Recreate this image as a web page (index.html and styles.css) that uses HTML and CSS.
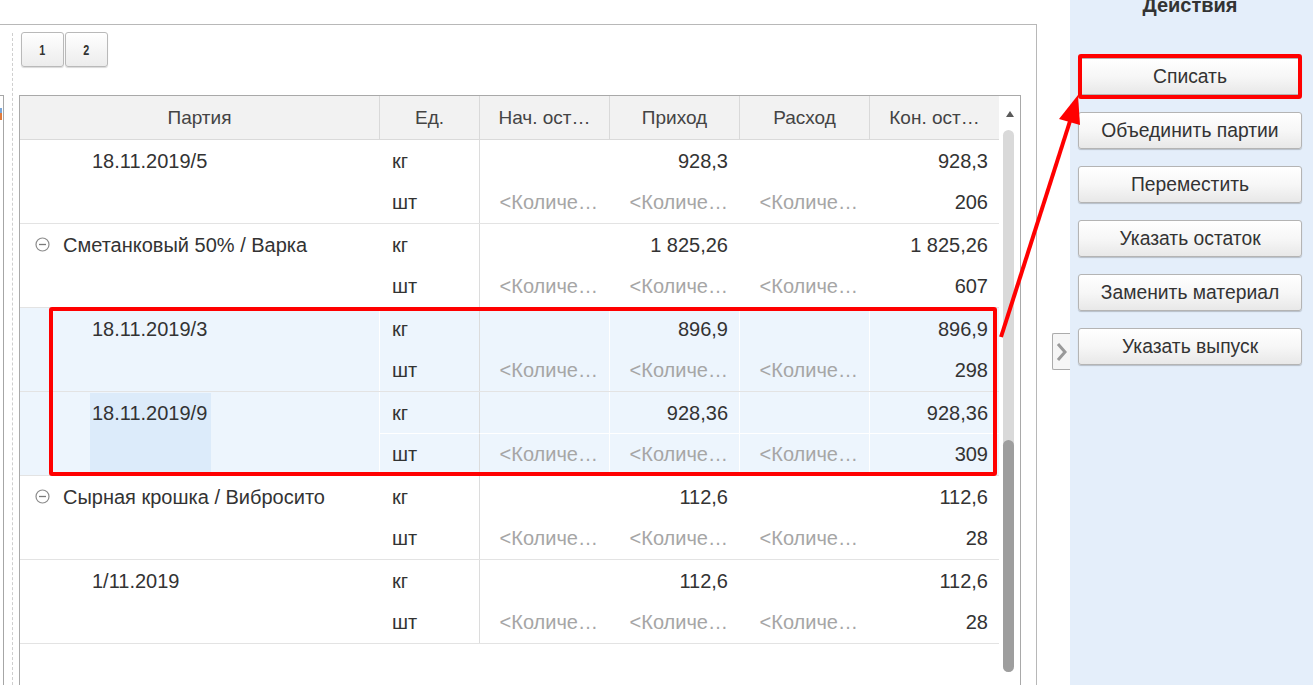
FILE: index.html
```html
<!DOCTYPE html>
<html lang="ru">
<head>
<meta charset="utf-8">
<title>Партии</title>
<link rel="stylesheet" href="styles.css">
</head>
<body>
<div class="app">
  <div class="main">
    <div class="leftfrag"><span class="fragicon"></span></div>
    <div class="dash"></div>
    <div class="content">
      <div class="pages">
        <div class="pbtn"><span>1</span></div>
        <div class="pbtn"><span>2</span></div>
      </div>
      <div class="table">
        <div class="tmain">
          <div class="thead">
            <div class="th w1">Партия</div>
            <div class="th w2">Ед.</div>
            <div class="th w3">Нач. ост…</div>
            <div class="th w3">Приход</div>
            <div class="th w3">Расход</div>
            <div class="th w6 last">Кон. ост…</div>
          </div>
          <div class="rows">
            <div class="group">
              <div class="name sub">18.11.2019/5</div>
              <div class="cell unit">кг</div><div class="cell num"></div><div class="cell num">928,3</div><div class="cell num"></div><div class="cell num last">928,3</div>
              <div class="cell unit">шт</div><div class="cell num ph">&lt;Количе…</div><div class="cell num ph">&lt;Количе…</div><div class="cell num ph">&lt;Количе…</div><div class="cell num last">206</div>
            </div>
            <div class="group">
              <div class="name grp"><svg class="minus" width="15" height="15" viewBox="0 0 15 15"><circle cx="7.5" cy="7.5" r="6.5" fill="none" stroke="#8c8c8c" stroke-width="1.2"/><line x1="4" y1="7.5" x2="11" y2="7.5" stroke="#7a7a7a" stroke-width="1.3"/></svg>Сметанковый 50% / Варка</div>
              <div class="cell unit">кг</div><div class="cell num"></div><div class="cell num">1 825,26</div><div class="cell num"></div><div class="cell num last">1 825,26</div>
              <div class="cell unit">шт</div><div class="cell num ph">&lt;Количе…</div><div class="cell num ph">&lt;Количе…</div><div class="cell num ph">&lt;Количе…</div><div class="cell num last">607</div>
            </div>
            <div class="group sel">
              <div class="name sub">18.11.2019/3</div>
              <div class="cell unit">кг</div><div class="cell num"></div><div class="cell num">896,9</div><div class="cell num"></div><div class="cell num last">896,9</div>
              <div class="cell unit">шт</div><div class="cell num ph">&lt;Количе…</div><div class="cell num ph">&lt;Количе…</div><div class="cell num ph">&lt;Количе…</div><div class="cell num last">298</div>
            </div>
            <div class="group sel cur">
              <div class="name sub"><span class="curtext">18.11.2019/9</span></div>
              <div class="cell unit top">кг</div><div class="cell num top"></div><div class="cell num top">928,36</div><div class="cell num top"></div><div class="cell num last top">928,36</div>
              <div class="cell unit">шт</div><div class="cell num ph">&lt;Количе…</div><div class="cell num ph">&lt;Количе…</div><div class="cell num ph">&lt;Количе…</div><div class="cell num last">309</div>
            </div>
            <div class="group">
              <div class="name grp"><svg class="minus" width="15" height="15" viewBox="0 0 15 15"><circle cx="7.5" cy="7.5" r="6.5" fill="none" stroke="#8c8c8c" stroke-width="1.2"/><line x1="4" y1="7.5" x2="11" y2="7.5" stroke="#7a7a7a" stroke-width="1.3"/></svg>Сырная крошка / Вибросито</div>
              <div class="cell unit">кг</div><div class="cell num"></div><div class="cell num">112,6</div><div class="cell num"></div><div class="cell num last">112,6</div>
              <div class="cell unit">шт</div><div class="cell num ph">&lt;Количе…</div><div class="cell num ph">&lt;Количе…</div><div class="cell num ph">&lt;Количе…</div><div class="cell num last">28</div>
            </div>
            <div class="group">
              <div class="name sub">1/11.2019</div>
              <div class="cell unit">кг</div><div class="cell num"></div><div class="cell num">112,6</div><div class="cell num"></div><div class="cell num last">112,6</div>
              <div class="cell unit">шт</div><div class="cell num ph">&lt;Количе…</div><div class="cell num ph">&lt;Количе…</div><div class="cell num ph">&lt;Количе…</div><div class="cell num last">28</div>
            </div>
          </div>
        </div>
        <div class="vscroll">
          <div class="up"><span class="tri"></span></div>
          <div class="track"><div class="thumb"></div></div>
        </div>
      </div>
    </div>
  </div>
  <div class="gutter">
    <div class="tab"><svg width="14" height="22" viewBox="0 0 14 22"><polyline points="3,3 10,11 3,19" fill="none" stroke="#9a9a9a" stroke-width="3"/></svg></div>
  </div>
  <aside class="panel">
    <div class="ptitle">Действия</div>
    <div class="btns">
      <div class="btn">Списать</div>
      <div class="btn">Объединить партии</div>
      <div class="btn">Переместить</div>
      <div class="btn">Указать остаток</div>
      <div class="btn">Заменить материал</div>
      <div class="btn">Указать выпуск</div>
    </div>
  </aside>
</div>
<div class="mark rows-mark"></div>
<div class="mark btn-mark"></div>
<svg class="arrow" width="1313" height="685" viewBox="0 0 1313 685">
  <line x1="1001" y1="337" x2="1071" y2="118" stroke="#ff0000" stroke-width="4"/>
  <polygon points="1078,95 1059,119 1080,125" fill="#ff0000"/>
</svg>
</body>
</html>
```
FILE: styles.css
```css
* { box-sizing: border-box; }
html, body {
  margin: 0;
  height: 685px;
  overflow: hidden;
  background: #fff;
  font-family: "Liberation Sans", Arial, sans-serif;
  color: #333;
}
.app { display: flex; height: 685px; }

.main {
  width: 1037px;
  flex: none;
  margin-top: 24px;
  border-top: 1px solid #b8b8b8;
  border-right: 1px solid #b8b8b8;
  display: flex;
}
.leftfrag {
  width: 4px;
  flex: none;
  margin-top: 70px;
  border-top: 1px solid #a6a6a6;
  border-right: 1px solid #a6a6a6;
  position: relative;
}
.fragicon {
  position: absolute;
  left: 0;
  top: 12px;
  width: 2px;
  height: 12px;
  background: linear-gradient(#7aa6d8 0 40%, #e07a3a 40% 100%);
}
.dash {
  width: 1px;
  flex: none;
  margin-left: 8px;
  margin-top: 8px;
  border-left: 1px dashed #cfcfcf;
}
.content { padding-top: 7px; }

.pages { display: flex; gap: 1px; margin-left: 8px; }
.pbtn {
  width: 43px;
  height: 35px;
  border: 1px solid #b9b9b9;
  border-radius: 3px;
  background: linear-gradient(#ffffff, #ececec);
  box-shadow: 0 1px 1px rgba(0,0,0,0.15);
  display: flex;
  align-items: center;
  justify-content: center;
  font-weight: bold;
  font-size: 15px;
  color: #333;
}
.pbtn span { display: inline-block; transform: scaleX(0.72); }

.table {
  margin-left: 6px;
  margin-top: 28px;
  width: 1002px;
  height: 600px;
  border: 1px solid #a9a9a9;
  display: flex;
}
.tmain { width: 979px; flex: none; }
.thead { display: flex; height: 44px; border-bottom: 1px solid #dadada; }
.th {
  background: #f2f2f2;
  border-right: 1px solid #d9d9d9;
  display: flex;
  align-items: center;
  justify-content: center;
  font-size: 19px;
  color: #444;
  white-space: nowrap;
}
.th.last { border-right: none; }
.w1 { width: 360px; }
.w2 { width: 100px; }
.w3 { width: 130px; }
.w6 { width: 129px; }

.group {
  display: grid;
  grid-template-columns: 360px 100px 130px 130px 130px 129px;
  grid-template-rows: 42px 41px;
  border-bottom: 1px solid #e3e3e3;
  font-size: 20px;
}
.group.sel { background: #edf5fd; }
.name {
  grid-row: 1 / span 2;
  grid-column: 1;
  border-right: 1px solid #fff;
  line-height: 42px;
  white-space: nowrap;
}
.name.sub { padding-left: 72px; }
.name.grp { padding-left: 15px; }
.minus { vertical-align: middle; margin-right: 13px; position: relative; top: -2px; }
.curtext {
  display: inline-block;
  height: 82px;
  margin-top: 1px;
  line-height: 40px;
  margin-left: -2px;
  padding-left: 2px;
  width: 121px;
  background: #dcebfa;
}
.cell {
  border-right: 1px solid #fff;
  line-height: 42px;
  padding: 0 11px 0 12px;
  white-space: nowrap;
  overflow: hidden;
}
.group .cell:nth-child(n+7) { line-height: 41px; }
.cell.unit { border-right-color: #dcdcdc; }
.cell.num { text-align: right; }
.cell.last { border-right: none; }
.cell.top { border-bottom: 1px solid #fff; }
.ph { color: #a6a6a6; }

.vscroll { width: 21px; flex: none; }
.up { height: 34px; display: flex; align-items: center; justify-content: center; }
.tri {
  width: 0; height: 0;
  border-left: 4px solid transparent;
  border-right: 4px solid transparent;
  border-bottom: 6px solid #5a5a5a;
  margin-top: 1px;
}
.track {
  margin-left: 4px;
  width: 11px;
  height: 542px;
  border-radius: 6px;
  background: #d9d9d9;
  padding-top: 310px;
}
.thumb { height: 232px; border-radius: 6px; background: #9e9e9e; }

.gutter { width: 33px; flex: none; padding-top: 333px; display: flex; flex-direction: column; align-items: flex-end; }
.tab {
  width: 18px;
  height: 37px;
  border: 1px solid #ababab;
  border-right: none;
  border-radius: 2px 0 0 2px;
  background: #f6f6f6;
  display: flex;
  align-items: center;
  justify-content: center;
}

.panel {
  width: 243px;
  flex: none;
  background: #e4eefa;
  padding-left: 8px;
}
.ptitle {
  width: 224px;
  text-align: center;
  font-weight: bold;
  font-size: 20px;
  line-height: 22px;
  margin-top: -6px;
  color: #333;
}
.btns { display: flex; flex-direction: column; gap: 17px; margin-top: 42px; }
.btn {
  width: 224px;
  height: 37px;
  border: 1px solid #b4b4b4;
  border-radius: 3px;
  background: linear-gradient(#ffffff 0%, #f7f7f7 50%, #e8e8e8 100%);
  box-shadow: 0 1px 1px rgba(0,0,0,0.2);
  display: flex;
  align-items: center;
  justify-content: center;
  font-size: 19.3px;
  color: #333;
}

.mark {
  position: absolute;
  border: 4px solid #ff0000;
  border-radius: 3px;
}
.rows-mark { left: 49px; top: 307px; width: 948px; height: 169px; }
.btn-mark { left: 1078px; top: 54px; width: 224px; height: 45px; }
.arrow { position: absolute; left: 0; top: 0; pointer-events: none; }
```
